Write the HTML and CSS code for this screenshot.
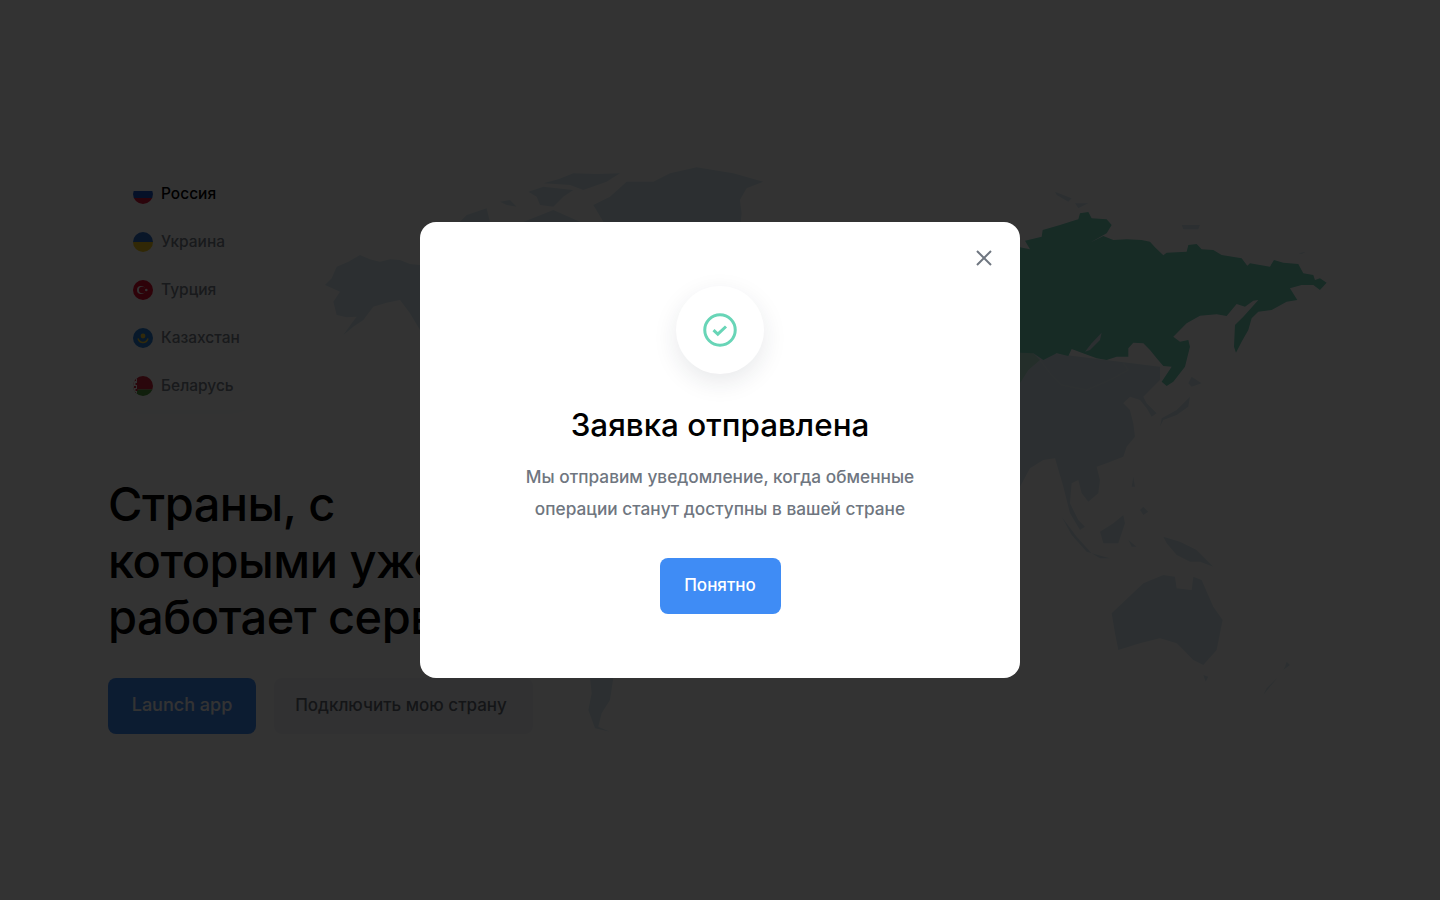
FILE: index.html
```html
<!DOCTYPE html>
<html lang="ru">
<head>
<meta charset="utf-8">
<title>Заявка отправлена</title>
<link rel="stylesheet" href="styles.css">
</head>
<body>
<div class="page">
  <svg class="map" viewBox="0 0 1440 900" aria-hidden="true">
    <g class="land">
      <g transform="translate(320 160) scale(.3333)">
        <path d="M15 375L35 355L50 320L85 305L120 285L150 298L180 305L210 298L240 300L270 312L300 315L420 360L420 640L300 510L270 460L240 420L200 428L160 440L130 480L100 500L70 525L95 490L110 470L80 472L50 465L40 425L60 395Z"/>
        <path d="M670 70L715 58L760 40L830 42L900 40L860 65L790 90L750 75Z"/>
        <path d="M625 95L670 80L760 90L730 110L700 140L660 135L650 110Z"/>
        <path d="M850 185L820 135L870 110L920 65L1000 65L1050 40L1130 22L1240 40L1330 65L1280 85L1260 120L1265 160L1260 210L850 210Z"/>
        <path d="M540 125L570 120L590 140L560 135Z"/>
        <path d="M420 185L440 165L500 145L510 185L510 210L420 210Z"/>
        <path d="M600 190L700 150L790 190L790 210L600 210Z"/>
      </g>
      <g transform="translate(530 670) scale(.3333)">
        <path d="M180 24L250 24L240 90L215 130L205 170L240 185L195 175L175 120L185 70Z"/>
      </g>
      <g transform="translate(1000 170) scale(.3333)">
        <path d="M165 65L215 85L205 95L170 75Z"/>
        <path d="M225 100L265 100L235 115Z"/>
        <path d="M545 165L600 165L595 178L550 178Z"/>
        <path d="M895 250L918 245L905 252Z"/>
      </g>
      <g transform="translate(1000 380) scale(.3333)">
        <path d="M0 -100L480 -40L480 0L450 30L430 50L440 70L470 100L455 110L440 85L420 60L390 50L370 70L390 90L400 130L405 170L380 200L370 230L320 250L290 260L300 300L295 340L265 365L245 340L235 300L215 310L210 370L235 420L255 440L240 450L210 400L190 320L165 235L130 240L90 265L60 320L0 320Z"/>
        <path d="M575 -10L605 10L575 20L565 10Z"/>
        <path d="M570 50L565 80L530 105L490 120L480 140L485 115L530 90Z"/>
        <path d="M185 410L230 470L275 520L260 515L215 465Z"/>
        <path d="M275 520L330 535L300 535Z"/>
        <path d="M370 405L375 430L355 490L310 490L300 455L340 430Z"/>
        <path d="M385 480L410 500L395 500Z"/>
        <path d="M400 290L405 320L395 320Z"/>
        <path d="M430 380L445 395L430 405L420 390Z"/>
        <path d="M490 470L540 485L590 510L640 560L600 545L570 545L530 525L500 490Z"/>
        <path d="M335 700L430 610L490 585L525 590L530 625L575 630L580 590L605 600L640 680L668 720L650 810L610 855L580 840L530 790L480 775L420 790L355 810L345 760Z"/>
        <path d="M610 885L625 890L617 905Z"/>
        <path d="M860 845L870 855L850 870L855 860Z"/>
        <path d="M835 890L790 945L800 925Z"/>
      </g>
    </g>
    <g transform="translate(1000 170) scale(.3333)">
      <path class="kz" d="M60 545L100 550L120 570L85 600L60 640Z"/>
      <path class="ru" d="M60 232L90 238L75 212L125 200L128 180L180 165L220 152L235 148L240 130L265 126L275 145L320 148L335 165L320 190L270 218L310 198L340 210L380 208L425 210L450 215L465 232L490 256L500 248L560 245L565 225L590 222L605 238L640 240L665 255L725 265L742 287L750 280L810 290L822 270L850 278L895 282L910 310L940 315L945 330L960 325L980 338L960 360L940 345L905 345L870 355L892 390L860 395L815 420L775 425L755 445L745 480L725 515L708 548L702 530L705 465L730 440L775 390L760 392L735 410L710 402L680 438L650 433L600 437L560 460L520 500L540 515L565 510L570 530L555 590L520 635L500 648L485 635L515 590L490 588L470 565L450 540L430 520L400 518L385 535L385 560L350 560L320 570L290 565L245 548L215 537L205 558L170 550L130 570L100 550L0 545L0 232Z"/>
      <path class="hole" d="M305 488L300 510L270 540L255 545L275 520Z"/>
      <path class="border" d="M120 570L150 610L185 645L260 660L330 630L385 600L360 565"/>
    </g>
  </svg>

  <main class="content">
    <ul class="countries">
      <li class="country active">
        <svg class="flag" viewBox="0 0 20 20"><rect width="20" height="7" fill="#fff"/><rect y="7" width="20" height="7" fill="#1c57c8"/><rect y="14" width="20" height="6" fill="#d8143a"/></svg>
        <span class="country-name">Россия</span>
      </li>
      <li class="country">
        <svg class="flag" viewBox="0 0 20 20"><rect width="20" height="10" fill="#2f6fc8"/><rect y="10" width="20" height="10" fill="#f4c91e"/></svg>
        <span class="country-name">Украина</span>
      </li>
      <li class="country">
        <svg class="flag" viewBox="0 0 20 20"><rect width="20" height="20" fill="#e40a2d"/><circle cx="8" cy="10" r="4" fill="#fff"/><circle cx="9.2" cy="10" r="3.2" fill="#e40a2d"/><circle cx="13.3" cy="10" r="1.3" fill="#fff"/></svg>
        <span class="country-name">Турция</span>
      </li>
      <li class="country">
        <svg class="flag" viewBox="0 0 20 20"><rect width="20" height="20" fill="#2a7fd6"/><circle cx="10" cy="8" r="2.4" fill="#f7d33a"/><path class="kz-arc" d="M5 10.5c1 3 3 4 5 4s4-1 5-4"/></svg>
        <span class="country-name">Казахстан</span>
      </li>
      <li class="country">
        <svg class="flag" viewBox="0 0 20 20"><rect width="20" height="13.5" fill="#d0243c"/><rect y="13.5" width="20" height="6.5" fill="#4f9a3c"/><rect width="4" height="20" fill="#fff"/><path d="M1 3h2v2h-2zM2.500 7h2v2h-2zM1 10h2v2h-2zM2.500 13h2v2h-2zM1 16h2v2h-2z" fill="#d0243c"/></svg>
        <span class="country-name">Беларусь</span>
      </li>
    </ul>

    <h1 class="headline">Страны, с которыми уже работает сервис</h1>

    <div class="actions">
      <a class="btn btn-primary">Launch app</a>
      <a class="btn btn-soft">Подключить мою страну</a>
    </div>
  </main>

  <div class="overlay">
    <section class="modal">
      <button class="close" aria-label="Закрыть">
        <svg viewBox="0 0 16 16"><path d="M1 1L15 15M15 1L1 15"/></svg>
      </button>
      <div class="badge">
        <svg viewBox="0 0 34 34"><circle cx="17" cy="17" r="15.250"/><path d="M10.500 17.200L14.800 21.200L23 13.500"/></svg>
      </div>
      <h2 class="modal-title">Заявка отправлена</h2>
      <p class="modal-text">Мы отправим уведомление, когда обменные<br>операции станут доступны в вашей стране</p>
      <button class="btn-ok"><span class="btn-ok-label">Понятно</span></button>
    </section>
  </div>
</div>
</body>
</html>
```
FILE: styles.css
```css
* { box-sizing: border-box; }
html, body { margin: 0; height: 100%; }
body {
  background: #fff;
  font-family: Inter, "Noto Sans", sans-serif;
  color: #000;
  overflow: hidden;
}
.page { position: relative; width: 100%; height: 900px; overflow: hidden; }

.map { position: absolute; inset: 0; width: 1440px; height: 900px; }
.land path { fill: #dcecf4; }
.ru { fill: #72d4bb; }
.kz { fill: #b4e4cf; }
.hole { fill: #dcecf4; }
.border { fill: none; stroke: #ffffff; stroke-opacity: .35; stroke-width: 2; }

.content { position: relative; padding: 170px 0 0 108px; }
.countries {
  list-style: none;
  margin: 0;
  padding: 0;
  width: 154px;
  background: #fff;
  box-shadow: 0 4px 32px rgba(40, 60, 90, .03);
}
.country {
  display: flex;
  align-items: center;
  gap: 8px;
  height: 48px;
  padding-left: 25px;
  font-size: 15.500px;
  font-weight: 500;
  color: #7a808a;
}
.country-name { margin-bottom: 2px; }
.country.active { color: #000; }
.flag { width: 20px; height: 20px; border-radius: 50%; flex: none; }
.kz-arc { fill: none; stroke: #f7d33a; stroke-width: 1.500; }

.headline {
  width: 430px;
  margin: 66px 0 0;
  font-size: 47px;
  line-height: 56.500px;
  font-weight: 500;
  letter-spacing: -.5px;
}
.actions { display: flex; gap: 18px; margin-top: 32px; }
.btn {
  display: flex;
  align-items: center;
  justify-content: center;
  height: 56px;
  padding-bottom: 2px;
  border-radius: 8px;
  font-size: 18px;
  font-weight: 500;
}
.btn-primary { width: 148px; background: #3f8cf5; color: #fff; }
.btn-soft { width: 259px; padding-right: 5px; background: #f4f6f9; color: #666c76; font-size: 17px; }

.overlay {
  position: absolute;
  inset: 0;
  display: flex;
  align-items: center;
  justify-content: center;
  background: rgba(0, 0, 0, .8);
}
.modal {
  position: relative;
  display: flex;
  flex-direction: column;
  align-items: center;
  width: 600px;
  height: 456px;
  padding-top: 64px;
  border-radius: 16px;
  background: #fff;
}
.close {
  position: absolute;
  top: 28px;
  right: 28px;
  width: 16px;
  height: 16px;
  padding: 0;
  border: 0;
  background: none;
}
.close svg { display: block; width: 16px; height: 16px; }
.close path { fill: none; stroke: #6f7680; stroke-width: 2; }
.badge {
  display: flex;
  align-items: center;
  justify-content: center;
  width: 88px;
  height: 88px;
  border-radius: 50%;
  background: #fff;
  box-shadow: 0 8px 24px rgba(30, 40, 60, .1);
}
.badge svg { width: 34px; height: 34px; fill: none; stroke: #68d5b7; stroke-width: 3; }
.modal-title {
  margin: 31px 0 0;
  font-size: 31.400px;
  line-height: 40px;
  font-weight: 500;
}
.modal-text {
  margin: 16px 0 0;
  font-size: 17.250px;
  line-height: 32px;
  font-weight: 500;
  color: #6f7680;
  text-align: center;
}
.btn-ok {
  width: 121px;
  height: 56px;
  margin-top: 33px;
  border: 0;
  border-radius: 8px;
  background: #3f8cf5;
  color: #fff;
  font: 500 17px Inter, "Noto Sans", sans-serif;
}
.btn-ok-label { position: relative; top: -1px; }
```
